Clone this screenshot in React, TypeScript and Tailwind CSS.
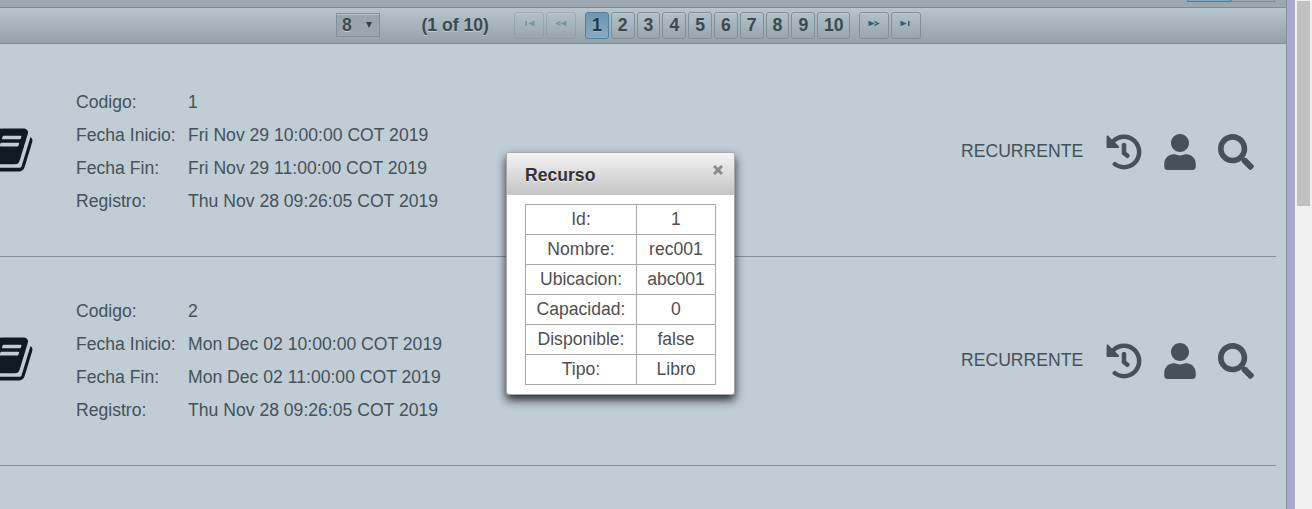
import { FaHistory, FaUser, FaSearch } from "react-icons/fa";

const bookings = [
  { id: "1", start: "Fri Nov 29 10:00:00 COT 2019", end: "Fri Nov 29 11:00:00 COT 2019", created: "Thu Nov 28 09:26:05 COT 2019" },
  { id: "2", start: "Mon Dec 02 10:00:00 COT 2019", end: "Mon Dec 02 11:00:00 COT 2019", created: "Thu Nov 28 09:26:05 COT 2019" },
];

const resource = [
  ["Id:", "1"],
  ["Nombre:", "rec001"],
  ["Ubicacion:", "abc001"],
  ["Capacidad:", "0"],
  ["Disponible:", "false"],
  ["Tipo:", "Libro"],
];

function BookIcon() {
  return (
    <svg viewBox="0 0 1792 1792" className="-ml-[14.5px] mt-[77px] size-[50px] shrink-0 fill-[#0e1b22]">
      <path d="M1639 478q40 57 18 129l-275 906q-19 64-76.5 107.5t-122.5 43.5h-923q-77 0-148.5-53.5t-99.5-131.5q-24-67-2-127 0-4 3-27t4-37q1-8-3-21.5t-3-19.5q2-11 8-21t16.5-23.5 16.5-23.5q23-38 45-91.5t30-91.5q3-10 .5-30t-.5-28q3-11 17-28t17-23q21-36 42-92t25-90q1-9-2.5-32t.5-28q4-13 22-30.5t22-22.5q19-26 42.5-84.5t27.5-96.5q1-8-3-25.5t-2-26.5q2-8 9-18t18-23 17-21q8-12 16.5-30.5t15-35 16-36 19.5-32 26.5-23.5 36-11.5 47.5 5.5l-1 3q38-9 51-9h761q74 0 114 56t18 130l-274 906q-36 119-71.5 153.5t-128.5 34.5h-869q-27 0-38 15-11 16-1 43 24 70 144 70h923q29 0 56-15.5t35-41.5l300-987q7-22 5-57 38 15 59 43zm-1064 2q-4 13 2 22.5t20 9.5h608q13 0 25.5-9.5t16.5-22.5l21-64q4-13-2-22.5t-20-9.5h-608q-13 0-25.5 9.5t-16.5 22.5zm-83 256q-4 13 2 22.5t20 9.5h608q13 0 25.5-9.5t16.5-22.5l21-64q4-13-2-22.5t-20-9.5h-608q-13 0-25.5 9.5t-16.5 22.5z" />
    </svg>
  );
}

function NavButton({ kind, disabled = false }: { kind: "first" | "prev" | "next" | "last"; disabled?: boolean }) {
  const back = kind === "first" || kind === "prev";
  const single = kind === "first" || kind === "last";
  return (
    <button
      className={`flex h-[27px] w-[30px] items-start justify-center rounded-[3px] border border-[#7f9099] bg-linear-to-b from-[#b3c2c9] to-[#98a5ac] pt-[7px] shadow-[inset_0_1px_0_#bccbd2] ${disabled ? "opacity-40" : ""}`}
    >
      <svg width="12" height="7" viewBox="0 0 12 7" className={`fill-[#2f6480] ${back ? "-scale-x-100" : ""}`}>
        <path d="M0.5 0.8L6.8 3.5L0.5 6.2Z" />
        {single ? <path d="M8 1h1.6v5H8z" /> : <path d="M6.4 0.8L11.8 3.5L6.4 6.2V4.6L9 3.5L6.4 2.4Z" />}
      </svg>
    </button>
  );
}

function Paginator() {
  return (
    <div className="flex h-[37px] items-start border-y border-[#7c8d95] bg-linear-to-b from-[#b7c6ce] to-[#94a1a8] pt-1 text-[17.6px] font-bold text-[#3c4a52] [text-shadow:0_1px_0_#c0cdd4]">
      <div className="ml-[336px] mt-px flex h-6 w-11 items-center justify-between border border-[#7f9099] bg-[#98a6ad] pl-[5px] pr-[7px] shadow-[inset_0_1px_0_#b8c7cf]">
        <span>8</span>
        <svg width="6" height="6" viewBox="0 0 6 6" className="fill-[#35434b]"><path d="M0 0h6L3 6Z" /></svg>
      </div>
      <span className="ml-[41.5px] mt-px w-[92.5px] leading-6">(1 of 10)</span>
      <div className="flex gap-0.5">
        <NavButton kind="first" disabled />
        <NavButton kind="prev" disabled />
      </div>
      <div className="ml-[9px] flex w-[265px] gap-[2px]">
        {Array.from({ length: 10 }, (_, i) => (
          <button
            key={i}
            className={`h-[27px] shrink-0 rounded-[3px] border leading-[25px] ${i === 9 ? "w-[33px]" : "w-[23.8px]"} ${i === 0 ? "border-[#4f7f9a] bg-linear-to-b from-[#6d97b0] to-[#87aabf] text-[#1f3b4a] [text-shadow:0_1px_0_#9bb9ca]" : "border-[#7f9099] bg-linear-to-b from-[#b3c2c9] to-[#98a5ac] shadow-[inset_0_1px_0_#bccbd2]"}`}
          >
            {i + 1}
          </button>
        ))}
      </div>
      <div className="ml-[9px] flex gap-0.5">
        <NavButton kind="next" />
        <NavButton kind="last" />
      </div>
    </div>
  );
}

export default function App() {
  return (
    <div className="relative flex h-[509px] w-[1312px] overflow-hidden bg-[#aba9d0] font-['Liberation_Sans',Arial,sans-serif] text-[17.6px] text-[#455259]">
      <main className="w-[1287px] shrink-0 border-r border-[#83929a] bg-[#c0cdd5]">
        <div className="flex h-[7px] items-start bg-[#9ba8af] pl-[1187px]">
          <div className="h-[2px] w-11 border-x border-b border-[#4f7f9a] bg-[#81a8be]" />
          <div className="h-[2px] w-11 border-x border-b border-[#7f9099]" />
        </div>
        <Paginator />
        <div className="pt-1">
          {bookings.map((b) => (
            <section key={b.id} className="mr-[10px] flex h-[209px] border-b border-[#82929b]">
              <BookIcon />
              <dl className="ml-[40.5px] mt-[38px] grid h-[132px] w-[885px] shrink-0 grid-cols-[112px_1fr] grid-rows-4 leading-[33px]">
                <dt>Codigo:</dt><dd>{b.id}</dd>
                <dt>Fecha Inicio:</dt><dd>{b.start}</dd>
                <dt>Fecha Fin:</dt><dd>{b.end}</dd>
                <dt>Registro:</dt><dd>{b.created}</dd>
              </dl>
              <span className="mt-[91px] w-[145px] shrink-0 leading-6">RECURRENTE</span>
              <div className="mt-[85.5px] flex shrink-0 gap-[22px]">
                <FaHistory size={36} />
                <FaUser size={36} className="w-[32px]" />
                <FaSearch size={36} />
              </div>
            </section>
          ))}
        </div>
      </main>
      <div className="w-2 shrink-0" />
      <div className="flex flex-1 items-start bg-[#f0f0f0] px-[2px] pt-px">
        <div className="h-[205px] w-[13px] bg-[#c1c1c1]" />
      </div>

      <div role="dialog" className="absolute left-[506px] top-[152px] h-[243px] w-[229px] rounded-[3px] border border-[#a8a8a8] bg-white text-[#4f4f4f] shadow-[0_5px_10px_rgba(0,0,0,0.8)]">
        <header className="flex h-[42px] justify-between rounded-t-[2px] bg-linear-to-b from-[#f4f4f4] to-[#c4c4c4] pl-[18px] pr-[11px]">
          <h2 className="font-bold leading-[45px] text-[#333] [text-shadow:0_1px_0_rgba(255,255,255,0.7)]">Recurso</h2>
          <svg width="10" height="10" viewBox="0 0 10 10" className="mt-3 stroke-[#8c8c8c] stroke-3"><path d="M1 1L9 9M9 1L1 9" /></svg>
        </header>
        <table className="ml-[18px] mt-[9px] w-[191px] table-fixed border-collapse text-center">
          <tbody>
            {resource.map(([k, v]) => (
              <tr key={k} className="h-[30px]">
                <td className="w-[111px] border border-[#a8a8a8] p-0 leading-[29px]">{k}</td>
                <td className="border border-[#a8a8a8] p-0 leading-[29px]">{v}</td>
              </tr>
            ))}
          </tbody>
        </table>
      </div>
    </div>
  );
}
